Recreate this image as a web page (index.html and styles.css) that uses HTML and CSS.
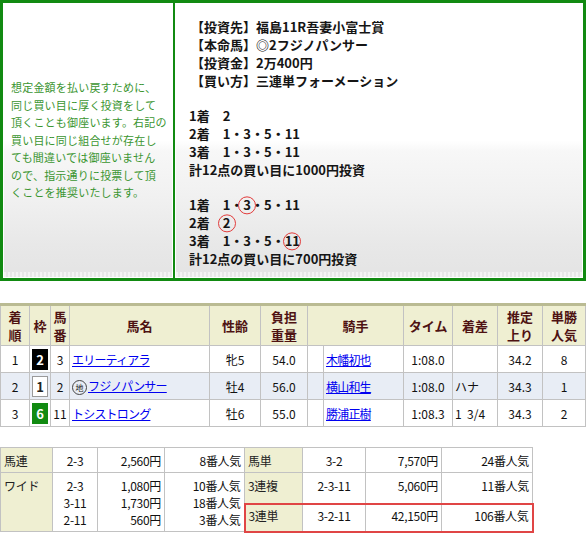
FILE: index.html
```html
<!DOCTYPE html>
<html lang="ja">
<head>
<meta charset="utf-8">
<title>投資結果</title>
<link rel="stylesheet" href="styles.css">
</head>
<body>
<div class="top">
  <div class="panel panel-left">
    <p class="note">想定金額を払い戻すために、<br>同じ買い目に厚く投資をして<br>頂くことも御座います。右記の<br>買い目に同じ組合せが存在し<br>ても間違いでは御座いません<br>ので、指示通りに投票して頂<br>くことを推奨いたします。</p>
  </div>
  <div class="divider"></div>
  <div class="panel panel-right">
    <div class="info">
      <div class="br">【投資先】福島11R吾妻小富士賞</div>
      <div class="br">【本命馬】◎2フジノパンサー</div>
      <div class="br">【投資金】2万400円</div>
      <div class="br">【買い方】三連単フォーメーション</div>
      <div class="blank"></div>
      <div>1着　2</div>
      <div>2着　1・3・5・11</div>
      <div>3着　1・3・5・11</div>
      <div>計12点の買い目に1000円投資</div>
      <div class="blank"></div>
      <div>1着　1・<span class="ring">3</span>・5・11</div>
      <div>2着　<span class="ring">2</span></div>
      <div>3着　1・3・5・<span class="ring">11</span></div>
      <div>計12点の買い目に700円投資</div>
    </div>
  </div>
</div>

<table class="result">
  <colgroup>
    <col class="w29"><col class="w21"><col class="w19"><col class="w140"><col class="w51"><col class="w47"><col class="w16"><col class="w80"><col class="w49"><col class="w45"><col class="w45"><col class="w43">
  </colgroup>
  <thead>
    <tr>
      <th>着<br>順</th><th>枠</th><th>馬<br>番</th><th>馬名</th><th>性齢</th><th>負担<br>重量</th><th colspan="2">騎手</th><th>タイム</th><th>着差</th><th>推定<br>上り</th><th>単勝<br>人気</th>
    </tr>
  </thead>
  <tbody>
    <tr>
      <td class="c">1</td><td class="c"><span class="waku waku-2">2</span></td><td class="c">3</td><td class="l"><a href="#">エリーティアラ</a></td><td class="c">牝5</td><td class="c">54.0</td><td></td><td class="l"><a href="#">木幡初也</a></td><td class="c">1:08.0</td><td class="l"></td><td class="c">34.2</td><td class="c">8</td>
    </tr>
    <tr class="alt">
      <td class="c">2</td><td class="c"><span class="waku waku-1">1</span></td><td class="c">2</td><td class="l"><span class="chi">地</span><a href="#">フジノパンサー</a></td><td class="c">牡4</td><td class="c">56.0</td><td></td><td class="l"><a href="#">横山和生</a></td><td class="c">1:08.0</td><td class="l">ハナ</td><td class="c">34.3</td><td class="c">1</td>
    </tr>
    <tr>
      <td class="c">3</td><td class="c"><span class="waku waku-6">6</span></td><td class="c">11</td><td class="l"><a href="#">トシストロング</a></td><td class="c">牡6</td><td class="c">55.0</td><td></td><td class="l"><a href="#">勝浦正樹</a></td><td class="c">1:08.3</td><td class="l">1&nbsp;&nbsp;3/4</td><td class="c">34.3</td><td class="c">2</td>
    </tr>
  </tbody>
</table>

<table class="pay">
  <colgroup>
    <col class="p52"><col class="p45"><col class="p67"><col class="p80"><col class="p58"><col class="p63"><col class="p76"><col class="p91">
  </colgroup>
  <tr>
    <th>馬連</th><td class="c">2-3</td><td class="r">2,560円</td><td class="r">8番人気</td>
    <th>馬単</th><td class="c">3-2</td><td class="r">7,570円</td><td class="r">24番人気</td>
  </tr>
  <tr class="mid">
    <th rowspan="2">ワイド</th><td rowspan="2" class="c">2-3<br>3-11<br>2-11</td><td rowspan="2" class="r">1,080円<br>1,730円<br>560円</td><td rowspan="2" class="r">10番人気<br>18番人気<br>3番人気</td>
    <th>3連複</th><td class="c">2-3-11</td><td class="r">5,060円</td><td class="r">11番人気</td>
  </tr>
  <tr class="hit">
    <th class="hit-first">3連単</th><td class="c">3-2-11</td><td class="r">42,150円</td><td class="r hit-last">106番人気</td>
  </tr>
</table>
</body>
</html>
```

FILE: styles.css
```css
html, body {
  margin: 0;
  padding: 0;
  background: #fff;
}

body {
  width: 586px;
  font-family: "Noto Sans CJK JP", "DejaVu Sans", sans-serif;
  color: #111;
}

/* ---------- top box ---------- */
.top {
  display: flex;
  height: 275px;
  border: 3px solid #118a11;
}

.panel {
  border: 1px solid #fff;
  background:
    repeating-linear-gradient(90deg, #f3f3f3 0 2px, #e6e6e6 2px 4px) left bottom / 100% 5px no-repeat,
    linear-gradient(to bottom, #ffffff 0%, #ffffff 50%, #f7f7f7 54%, #f1f1f1 70%, #e8e8e8 88%, #e4e4e4 100%);
}

.panel-left {
  width: 170px;
  display: flex;
  align-items: center;
  padding-left: 7px;
  box-sizing: border-box;
}

.divider {
  width: 2px;
  background: #118a11;
}

.panel-right {
  flex: 1;
  padding: 14px 0 0 13px;
}

.note {
  margin: 0;
  font-size: 11px;
  line-height: 17.6px;
  color: #3a9530;
  letter-spacing: 0.2px;
  white-space: nowrap;
}

.info {
  font-size: 13px;
  font-weight: bold;
  line-height: 18px;
  letter-spacing: 0;
  color: #151515;
  white-space: nowrap;
}

.info .br {
  margin-left: 2px;
}

.info .blank {
  height: 17px;
}

.ring {
  position: relative;
}

.ring::after {
  content: "";
  position: absolute;
  left: 50%;
  top: 50%;
  width: 16px;
  height: 16px;
  transform: translate(-50%, -48%);
  border: 1.5px solid #e23b3b;
  border-radius: 50%;
}

/* ---------- result table ---------- */
.result {
  margin-top: 22px;
  width: 586px;
  border-collapse: collapse;
  table-layout: fixed;
  border-top: 3px solid #babb93;
  font-size: 12px;
}

.w29 { width: 29px; }
.w21 { width: 21px; }
.w19 { width: 19px; }
.w140 { width: 140px; }
.w51 { width: 51px; }
.w47 { width: 47px; }
.w16 { width: 16px; }
.w80 { width: 80px; }
.w49 { width: 49px; }
.w45 { width: 45px; }
.w43 { width: 43px; }

.result th,
.result td {
  border: 1px solid #c2c2c2;
  padding: 0 2px;
  overflow: hidden;
  white-space: nowrap;
}

.result th {
  background: #efefd2;
  color: #4e1212;
  font-size: 13px;
  font-weight: bold;
  line-height: 18px;
  height: 39px;
  padding: 0;
  text-align: center;
}

.result td {
  height: 26px;
  color: #111;
}

.result tr.alt td {
  background: #e8edf5;
}

.c { text-align: center; }
.l { text-align: left; }
.r { text-align: right; }

.result a {
  color: #0000f0;
  text-decoration: underline;
  letter-spacing: -0.8px;
}

.waku {
  display: inline-block;
  width: 16px;
  height: 21px;
  line-height: 21px;
  font-weight: bold;
  font-size: 13px;
  text-align: center;
  vertical-align: middle;
  box-sizing: border-box;
}

.waku-1 {
  background: #fff;
  color: #222;
  border: 1px solid #9a9a9a;
  line-height: 19px;
}

.waku-2 {
  background: #000;
  color: #fff;
}

.waku-6 {
  background: #118a11;
  color: #fff;
}

.chi {
  display: inline-block;
  width: 13px;
  height: 13px;
  line-height: 13px;
  border: 1px solid #444;
  border-radius: 50%;
  font-size: 8px;
  text-align: center;
  vertical-align: middle;
  margin-right: 1px;
  color: #222;
}

/* ---------- payout table ---------- */
.pay {
  margin-top: 20px;
  width: 533px;
  border-collapse: collapse;
  table-layout: fixed;
  font-size: 12px;
}

.p52 { width: 52px; }
.p45 { width: 45px; }
.p67 { width: 67px; }
.p80 { width: 80px; }
.p58 { width: 58px; }
.p63 { width: 63px; }
.p76 { width: 76px; }
.p91 { width: 91px; }

.pay th,
.pay td {
  border: 1px solid #c2c2c2;
  padding: 4px 3px 3px;
  line-height: 17px;
  vertical-align: top;
  white-space: nowrap;
  letter-spacing: -0.3px;
}

.pay th {
  background: #efefd2;
  font-weight: normal;
  text-align: left;
  color: #222;
}

.pay tr.mid th,
.pay tr.mid td {
  height: 23px;
}

.pay tr.hit th,
.pay tr.hit td {
  border-top: 2px solid #e04545;
  border-bottom: 2px solid #e04545;
  padding-top: 2px;
}

.pay .hit-first {
  border-left: 2px solid #e04545;
}

.pay .hit-last {
  border-right: 2px solid #e04545;
}
```
